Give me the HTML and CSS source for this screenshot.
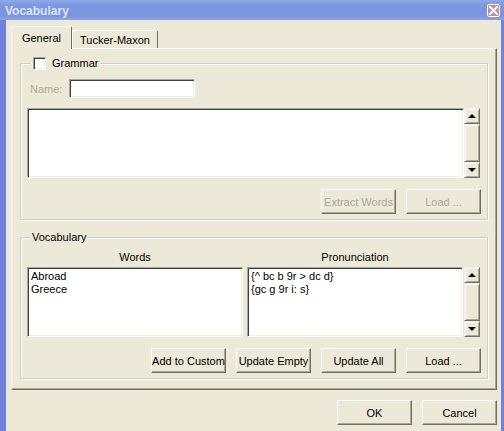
FILE: index.html
```html
<!DOCTYPE html>
<html>
<head>
<meta charset="utf-8">
<link rel="stylesheet" href="styles.css">
</head>
<body>
<div class="window">
  <div class="titlebar">
    <span class="title">Vocabulary</span>
    <span class="close"><svg width="9" height="9" viewBox="0 0 9 9"><path d="M1 1L8 8M8 1L1 8" stroke="#fff" stroke-width="2" stroke-linecap="square"/></svg></span>
  </div>
  <div class="client">
    <div class="tabs">
      <div class="tab active">General</div>
      <div class="tab tab-wide">Tucker-Maxon</div>
    </div>
    <div class="panel">
      <fieldset class="group">
        <legend class="legend-check"><span class="checkbox"></span><span class="legend-text">Grammar</span></legend>
        <div class="name-row">
          <span class="disabled-label">Name:</span>
          <span class="input name-input"></span>
        </div>
        <div class="box-row">
          <div class="input textbox"></div>
          <div class="scrollbar">
            <div class="sb-btn"><span class="arrow-up"></span></div>
            <div class="sb-thumb"></div>
            <div class="sb-btn"><span class="arrow-down"></span></div>
          </div>
        </div>
        <div class="button-row">
          <div class="button disabled">Extract Words</div>
          <div class="button disabled">Load ...</div>
        </div>
      </fieldset>
      <fieldset class="group vocab">
        <legend class="legend-plain">Vocabulary</legend>
        <div class="label-row">
          <div class="col-label">Words</div>
          <div class="col-label pron-label">Pronunciation</div>
        </div>
        <div class="box-row">
          <div class="input listbox">
            <div>Abroad</div>
            <div>Greece</div>
          </div>
          <div class="input listbox pron-box">
            <div>{^ bc b 9r &gt; dc d}</div>
            <div>{gc g 9r i: s}</div>
          </div>
          <div class="scrollbar">
            <div class="sb-btn"><span class="arrow-up"></span></div>
            <div class="sb-thumb"></div>
            <div class="sb-btn"><span class="arrow-down"></span></div>
          </div>
        </div>
        <div class="button-row">
          <div class="button">Add to Custom</div>
          <div class="button">Update Empty</div>
          <div class="button">Update All</div>
          <div class="button">Load ...</div>
        </div>
      </fieldset>
    </div>
    <div class="dialog-buttons">
      <div class="button">OK</div>
      <div class="button">Cancel</div>
    </div>
  </div>
</div>
</body>
</html>
```
FILE: styles.css
```css
* { box-sizing: border-box; }
html, body { margin: 0; padding: 0; }
body {
  width: 504px;
  height: 431px;
  overflow: hidden;
  background: #ECE9D8;
  font-family: "Liberation Sans", Arial, sans-serif;
  font-size: 11px;
  color: #000;
}
.window {
  width: 504px;
  height: 431px;
  display: flex;
  flex-direction: column;
}
.titlebar {
  height: 20px;
  flex: none;
  display: flex;
  align-items: center;
  padding: 0 4px 0 5px;
  background: linear-gradient(#8EA6E8, #7C98E0 30%, #7994DE 75%, #8AA3E6);
}
.title {
  font-weight: bold;
  font-size: 12px;
  color: #D8E4F8;
  padding-top: 1px;
}
.close {
  margin-left: auto;
  width: 13px;
  height: 13px;
  border: 1px solid #fff;
  border-radius: 2px;
  background: #B98EB4;
  display: flex;
  align-items: center;
  justify-content: center;
}
.close svg { display: block; }
.client {
  flex: 1;
  display: flex;
  flex-direction: column;
  border-left: 6px solid #6F83DE;
  border-right: 3px solid #6F83DE;
  background: #ECE9D8;
  padding: 6px 4px 0 5px;
}
.tabs {
  display: flex;
  align-items: flex-end;
  height: 22px;
}
.tab {
  width: 86px;
  height: 18px;
  border: 1px solid;
  border-color: #fff #716F64 transparent #fff;
  border-bottom: none;
  border-radius: 2px 2px 0 0;
  display: flex;
  align-items: center;
  justify-content: center;
  background: #ECE9D8;
  padding-top: 1px;
}
.tab.active {
  width: 61px;
  height: 23px;
  margin-bottom: -1px;
  position: relative;
  z-index: 1;
  padding-top: 0;
  padding-bottom: 1px;
}
.panel {
  width: 486px;
  height: 342px;
  border: 1px solid;
  border-color: #fff #716F64 #716F64 #fff;
  box-shadow: inset -1px -1px 0 #ACA899;
  padding: 8px 8px 0 8px;
}
.group {
  margin: 0;
  padding: 9px 6px 5px 6px;
  min-width: 0;
  border: 1px solid #D0D0BF;
  box-shadow: inset 1px 1px 0 #fff, 1px 1px 0 #fff;
}
.group.vocab {
  margin-top: 11px;
  padding-top: 7px;
}
legend {
  background: #ECE9D8;
  padding: 0 2px;
  height: 13px;
  line-height: 13px;
}
.legend-check {
  margin-left: 4px;
  display: flex;
  align-items: center;
}
.legend-plain { margin-left: 3px; }
.legend-text { margin-left: 6px; }
.checkbox {
  width: 13px;
  height: 13px;
  background: #fff;
  border: 1px solid;
  border-color: #ACA899 #fff #fff #ACA899;
  box-shadow: inset 1px 1px 0 #404040, inset -1px -1px 0 #F1EFE2;
}
.input {
  background: #fff;
  border: 1px solid;
  border-color: #ACA899 #fff #fff #ACA899;
  box-shadow: inset 1px 1px 0 #404040, inset -1px -1px 0 #F1EFE2;
}
.name-row {
  display: flex;
  align-items: center;
  height: 19px;
}
.disabled-label {
  color: #ACA899;
  margin-left: 3px;
  width: 39px;
}
.name-input {
  width: 126px;
  height: 19px;
}
.box-row {
  display: flex;
  margin-top: 10px;
  height: 70px;
}
.textbox {
  width: 437px;
  height: 70px;
}
.scrollbar {
  width: 16px;
  height: 70px;
  display: flex;
  flex-direction: column;
}
.sb-btn, .sb-thumb {
  border: 1px solid;
  border-color: #F1EFE2 #716F64 #716F64 #F1EFE2;
  box-shadow: inset 1px 1px 0 #fff, inset -1px -1px 0 #ACA899;
  background: #ECE9D8;
}
.sb-btn {
  height: 16px;
  display: flex;
  align-items: center;
  justify-content: center;
}
.sb-thumb { flex: 1; }
.arrow-up, .arrow-down {
  width: 0;
  height: 0;
  border-left: 4px solid transparent;
  border-right: 4px solid transparent;
}
.arrow-up { border-bottom: 4px solid #000; }
.arrow-down { border-top: 4px solid #000; }
.button-row {
  display: flex;
  justify-content: flex-end;
  gap: 10px;
  margin-top: 11px;
}
.button {
  width: 75px;
  height: 25px;
  display: flex;
  align-items: center;
  justify-content: center;
  border: 1px solid;
  border-color: #fff #716F64 #716F64 #fff;
  box-shadow: inset -1px -1px 0 #ACA899;
  background: #ECE9D8;
  white-space: nowrap;
}
.button.disabled { color: #ACA899; }
.label-row {
  display: flex;
  gap: 4px;
  height: 13px;
  line-height: 13px;
}
.col-label {
  width: 216px;
  text-align: center;
}
.vocab .box-row { margin-top: 3px; }
.listbox {
  width: 216px;
  height: 70px;
  padding: 2px 3px;
  line-height: 13px;
}
.pron-box {
  margin-left: 4px;
  margin-right: 1px;
}
.dialog-buttons {
  display: flex;
  justify-content: flex-end;
  gap: 10px;
  margin-top: 10px;
}
```
